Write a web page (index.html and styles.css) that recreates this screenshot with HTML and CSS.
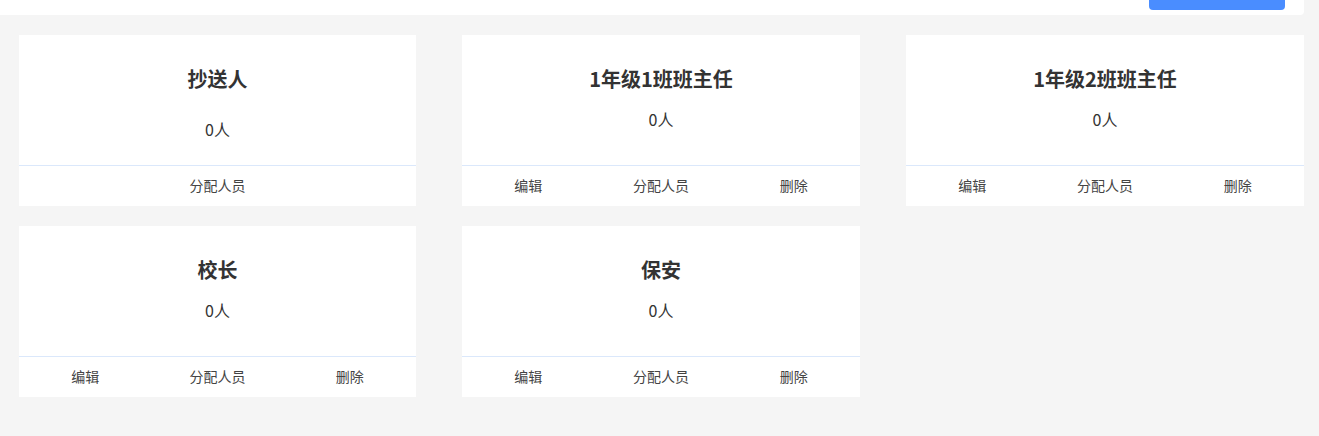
FILE: index.html
```html
<!DOCTYPE html>
<html lang="zh">
<head>
<meta charset="utf-8">
<link rel="stylesheet" href="styles.css">
</head>
<body>
<div class="page">
  <div class="topbar"><button class="btn-primary"></button></div>
  <div class="grid">
    <div class="card">
      <div class="card-body">
        <div class="card-title">抄送人</div>
        <div class="card-count card-count--low">0人</div>
      </div>
      <div class="card-foot">
        <span class="act">分配人员</span>
      </div>
    </div>
    <div class="card">
      <div class="card-body">
        <div class="card-title">1年级1班班主任</div>
        <div class="card-count">0人</div>
      </div>
      <div class="card-foot">
        <span class="act">编辑</span><span class="act">分配人员</span><span class="act">删除</span>
      </div>
    </div>
    <div class="card">
      <div class="card-body">
        <div class="card-title">1年级2班班主任</div>
        <div class="card-count">0人</div>
      </div>
      <div class="card-foot">
        <span class="act">编辑</span><span class="act">分配人员</span><span class="act">删除</span>
      </div>
    </div>
    <div class="card">
      <div class="card-body">
        <div class="card-title">校长</div>
        <div class="card-count">0人</div>
      </div>
      <div class="card-foot">
        <span class="act">编辑</span><span class="act">分配人员</span><span class="act">删除</span>
      </div>
    </div>
    <div class="card">
      <div class="card-body">
        <div class="card-title">保安</div>
        <div class="card-count">0人</div>
      </div>
      <div class="card-foot">
        <span class="act">编辑</span><span class="act">分配人员</span><span class="act">删除</span>
      </div>
    </div>
  </div>
</div>
</body>
</html>
```

FILE: styles.css
```css
html, body {
  margin: 0;
  padding: 0;
  background: #f5f5f5;
  font-family: "Noto Sans CJK SC", "Noto Sans", sans-serif;
  color: #333;
}
.page {
  width: 1304px;
}
.topbar {
  height: 15px;
  background: #fff;
  border-bottom-right-radius: 4px;
  display: flex;
  justify-content: flex-end;
  padding-right: 19px;
}
.btn-primary {
  width: 136px;
  height: 10px;
  border: 0;
  padding: 0;
  background: #4a8dff;
  border-radius: 0 0 4px 4px;
}
.grid {
  display: grid;
  grid-template-columns: 397px 398px 398px;
  column-gap: 46px;
  row-gap: 20px;
  margin: 20px 0 0 19px;
}
.card {
  background: #fff;
  display: flex;
  flex-direction: column;
}
.card-body {
  height: 131px;
  box-sizing: border-box;
  padding-top: 30px;
  text-align: center;
  border-bottom: 1px solid #dbe8fb;
}
.card-title {
  font-size: 20px;
  line-height: 28px;
  font-weight: 700;
  color: #333;
}
.card-count {
  margin-top: 15px;
  font-size: 16px;
  line-height: 22px;
  color: #333;
}
.card-count--low {
  margin-top: 25px;
}
.card-foot {
  height: 40px;
  box-sizing: border-box;
  padding-bottom: 2px;
  display: flex;
  align-items: center;
}
.act {
  flex: 1;
  text-align: center;
  font-size: 14px;
  color: #444;
}
```
